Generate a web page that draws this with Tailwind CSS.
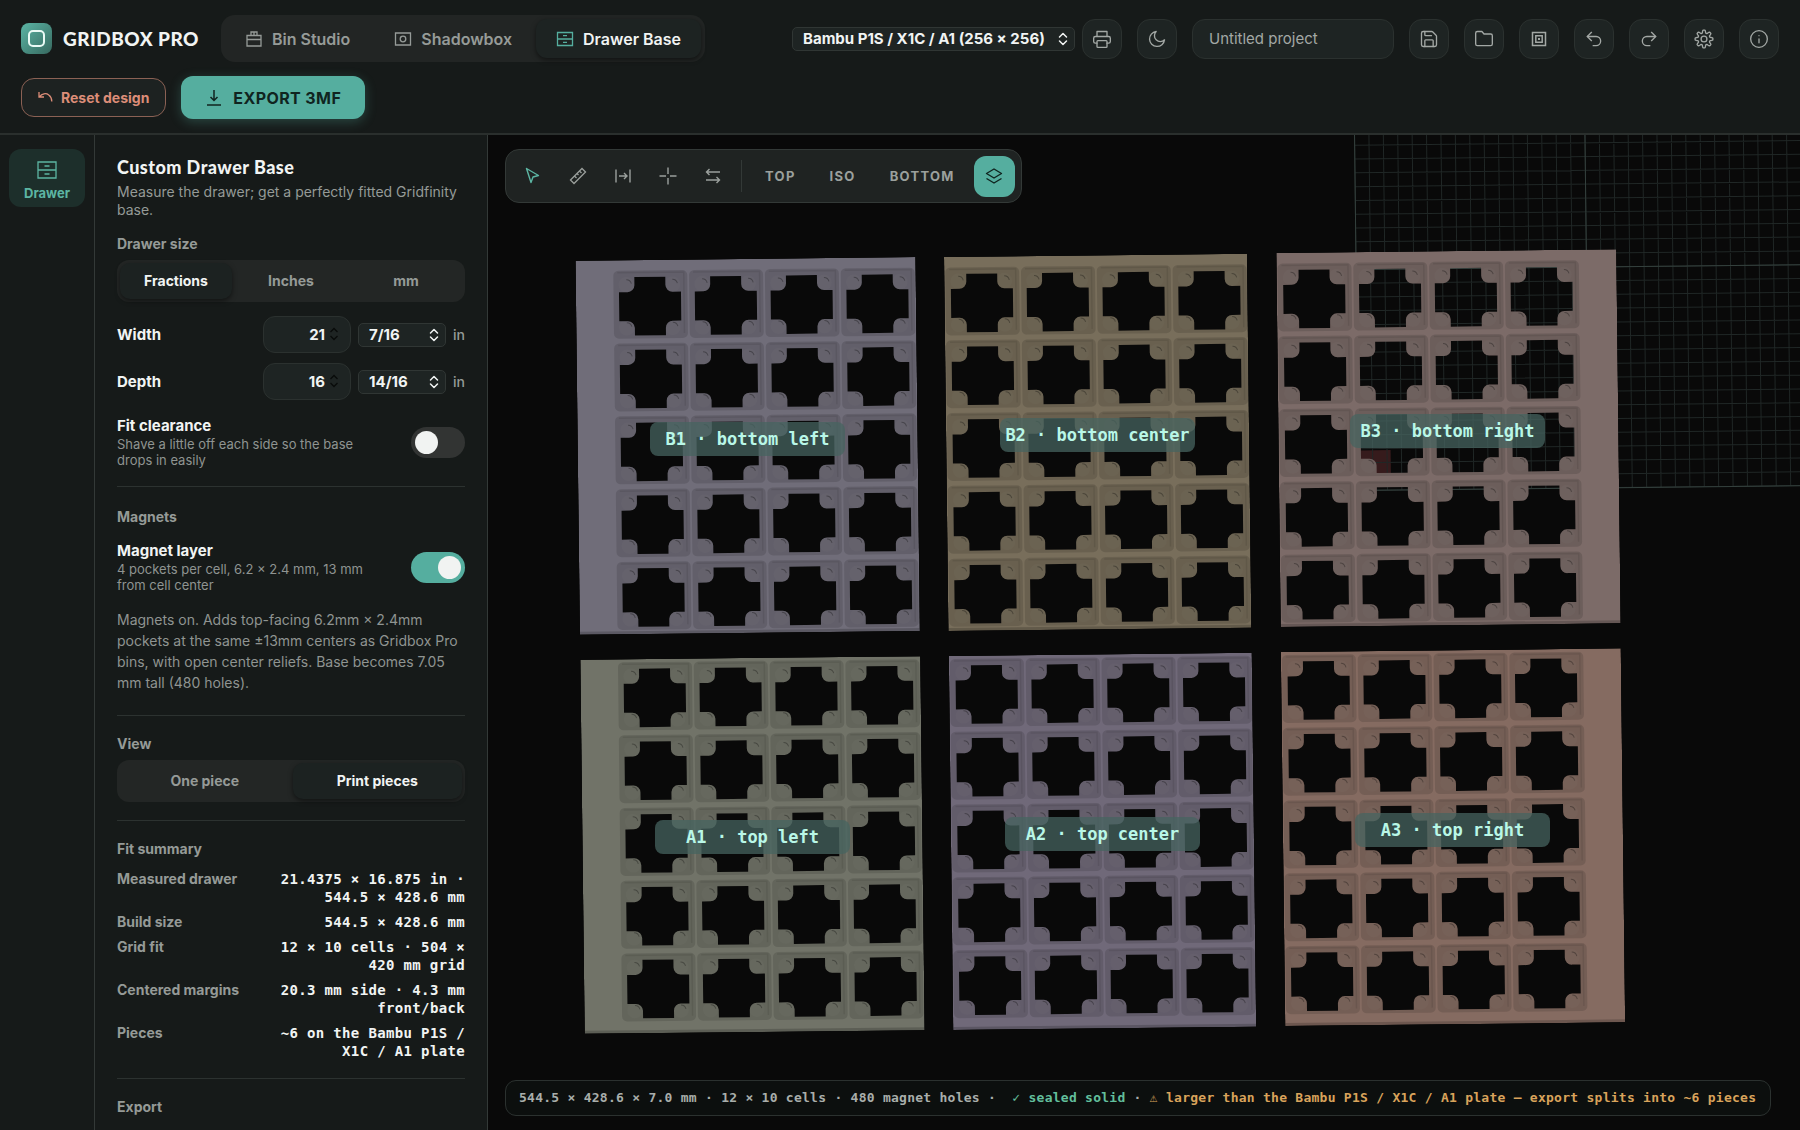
<!DOCTYPE html>
<html lang="en">
<head>
  <meta charset="UTF-8" />
  <meta name="viewport" content="width=device-width, initial-scale=1" />
  <title>Gridbox Pro</title>
  <script src="https://cdn.jsdelivr.net/npm/@tailwindcss/browser@4"></script>
</head>
<body class="h-screen flex flex-col overflow-hidden bg-[#161a19] text-[#f1f4f3] font-['Inter',sans-serif] text-sm">

  <header class="border-b-2 border-[#2a2f2d] px-[21px] pt-[15px] pb-[14px] flex flex-col gap-[14px]">
    <div class="flex items-center">
      <div class="flex items-center gap-[11px]">
        <svg class="size-[31px]" viewBox="0 0 31 31" fill="none">
          <defs><linearGradient id="logo" x1="0" y1="0" x2="1" y2="1"><stop stop-color="#5bb5a5" /><stop offset="1" stop-color="#37695f" /></linearGradient></defs>
          <rect width="31" height="31" rx="8" fill="url(#logo)" />
          <rect x="8" y="8" width="15" height="15" rx="4" stroke="#eafaf5" stroke-width="2" />
        </svg>
        <span class="font-['Lato',sans-serif] font-black text-[19px] tracking-wide whitespace-nowrap">GRIDBOX PRO</span>
      </div>

      <nav class="ml-[22px] h-[47px] p-1 flex gap-1 rounded-[14px] bg-[#222524] text-base font-semibold text-[#969b98] whitespace-nowrap">
        <button class="px-5 flex items-center gap-[9px] rounded-[11px]">
          <svg class="size-[18px]" viewBox="0 0 18 18" fill="none" stroke="currentColor" stroke-width="1.3"><path d="M2 5.500h14v10.500H2zM2 9.500h14M6 5.500V2h6v3.500M9 2v3.500" /></svg>
          Bin Studio
        </button>
        <button class="px-5 flex items-center gap-[9px] rounded-[11px]">
          <svg class="size-[18px]" viewBox="0 0 18 18" fill="none" stroke="currentColor" stroke-width="1.3"><path d="M1.500 3h15v12h-15z" /><circle cx="9" cy="9" r="2.800" /></svg>
          Shadowbox
        </button>
        <button class="px-5 flex items-center gap-[9px] rounded-[11px] bg-[#1d2322] text-[#f1f4f3] shadow-[0_2px_5px_rgba(0,0,0,0.5)]">
          <svg class="size-[18px] text-[#55ae9f]" viewBox="0 0 18 18" fill="none" stroke="currentColor" stroke-width="1.3"><path d="M1.500 2.500h15v13h-15zM1.500 9h15M7 5.700h4M7 12.300h4" /></svg>
          Drawer Base
        </button>
      </nav>

      <div class="ml-auto flex items-center gap-[15px] text-[#a3a8a5]">
        <div class="flex items-center gap-[7px]">
          <div class="relative">
            <select aria-label="Printer" class="block appearance-none w-[283px] h-6 pl-[10px] pr-6 rounded-[5px] border border-[#303634] bg-[#1e2423] text-[#f1f4f3] text-[15px] leading-5 font-bold">
              <option>Bambu P1S / X1C / A1 (256 × 256)</option>
            </select>
            <svg class="absolute right-[7px] top-[5px] w-[10px] h-[14px] text-[#f1f4f3] pointer-events-none" viewBox="0 0 10 14" fill="none" stroke="currentColor" stroke-width="1.500" stroke-linecap="round" stroke-linejoin="round"><path d="M1.500 5 5 1.500 8.500 5M1.500 9 5 12.500 8.500 9" /></svg>
          </div>
          <button aria-label="Print" class="size-10 grid place-items-center rounded-[13px] border border-[#2b312f] bg-[#1e2423]">
            <svg class="size-5" viewBox="0 0 24 24" fill="none" stroke="currentColor" stroke-width="1.600" stroke-linecap="round" stroke-linejoin="round"><path d="M6 9V3h12v6M6 17H4a2 2 0 0 1-2-2v-4a2 2 0 0 1 2-2h16a2 2 0 0 1 2 2v4a2 2 0 0 1-2 2h-2" /><rect x="6" y="14" width="12" height="8" rx="1" /></svg>
          </button>
        </div>
        <button aria-label="Dark mode" class="size-10 grid place-items-center rounded-[13px] border border-[#2b312f] bg-[#1e2423]">
          <svg class="size-5" viewBox="0 0 24 24" fill="none" stroke="currentColor" stroke-width="1.600" stroke-linecap="round" stroke-linejoin="round"><path d="M21 13A9 9 0 1 1 11 3a7 7 0 0 0 10 10z" /></svg>
        </button>
        <input type="text" aria-label="Project name" placeholder="Untitled project" class="w-[202px] h-10 px-4 rounded-[13px] border border-[#2b312f] bg-[#1e2423] text-[15px] placeholder:text-[#a3a8a5]" />
        <button aria-label="Save" class="size-10 grid place-items-center rounded-[13px] border border-[#2b312f] bg-[#1e2423]">
          <svg class="size-5" viewBox="0 0 24 24" fill="none" stroke="currentColor" stroke-width="1.600" stroke-linecap="round" stroke-linejoin="round"><path d="M15.200 3a2 2 0 0 1 1.400.6l3.800 3.800a2 2 0 0 1 .6 1.400V19a2 2 0 0 1-2 2H5a2 2 0 0 1-2-2V5a2 2 0 0 1 2-2z" /><path d="M17 21v-7a1 1 0 0 0-1-1H8a1 1 0 0 0-1 1v7M7 3v4a1 1 0 0 0 1 1h7" /></svg>
        </button>
        <button aria-label="Open" class="size-10 grid place-items-center rounded-[13px] border border-[#2b312f] bg-[#1e2423]">
          <svg class="size-5" viewBox="0 0 24 24" fill="none" stroke="currentColor" stroke-width="1.600" stroke-linecap="round" stroke-linejoin="round"><path d="M20 20a2 2 0 0 0 2-2V8a2 2 0 0 0-2-2h-8l-2.500-3H4a2 2 0 0 0-2 2v13a2 2 0 0 0 2 2z" /></svg>
        </button>
        <button aria-label="Library" class="size-10 grid place-items-center rounded-[13px] border border-[#2b312f] bg-[#1e2423]">
          <svg class="size-5" viewBox="0 0 20 20" fill="none" stroke="currentColor" stroke-width="1.500"><path d="M3.500 3.500h13v13h-13zM6.800 6.800h6.400v6.400H6.800z" /><path d="M9 9h2v2H9z" fill="currentColor" stroke="none" /></svg>
        </button>
        <button aria-label="Undo" class="size-10 grid place-items-center rounded-[13px] border border-[#2b312f] bg-[#1e2423]">
          <svg class="size-5" viewBox="0 0 24 24" fill="none" stroke="currentColor" stroke-width="1.600" stroke-linecap="round" stroke-linejoin="round"><path d="M9 14 4 9l5-5" /><path d="M4 9h10.500a5.500 5.500 0 0 1 0 11H11" /></svg>
        </button>
        <button aria-label="Redo" class="size-10 grid place-items-center rounded-[13px] border border-[#2b312f] bg-[#1e2423]">
          <svg class="size-5" viewBox="0 0 24 24" fill="none" stroke="currentColor" stroke-width="1.600" stroke-linecap="round" stroke-linejoin="round"><path d="m15 14 5-5-5-5" /><path d="M20 9H9.500a5.500 5.500 0 0 0 0 11H13" /></svg>
        </button>
        <button aria-label="Settings" class="size-10 grid place-items-center rounded-[13px] border border-[#2b312f] bg-[#1e2423]">
          <svg id="gear" class="size-5" viewBox="0 0 24 24" fill="none" stroke="currentColor" stroke-width="1.600" stroke-linejoin="round"><circle cx="12" cy="12" r="3.500" /></svg>
        </button>
        <button aria-label="About" class="size-10 grid place-items-center rounded-[13px] border border-[#2b312f] bg-[#1e2423]">
          <svg class="size-5" viewBox="0 0 24 24" fill="none" stroke="currentColor" stroke-width="1.600" stroke-linecap="round"><circle cx="12" cy="12" r="10" /><path d="M12 16.500V12M12 8v.01" /></svg>
        </button>
      </div>
    </div>

    <div class="flex items-center gap-[15px]">
      <button class="h-[39px] px-4 flex items-center gap-2 rounded-[13px] border border-[#8b6154] bg-[#1d2221] text-[#dc8d78] font-bold">
        <svg class="size-[15px]" viewBox="0 0 15 15" fill="none" stroke="currentColor" stroke-width="1.300"><path d="M1 2v5h5M1.300 6.800C4 3.500 8 2.800 10.800 5c2 1.500 3 4 3 6.500" /></svg>
        Reset design
      </button>
      <button class="h-[43px] px-6 flex items-center gap-[10px] rounded-xl bg-[#55ae9f] text-[#10241f] text-base font-bold tracking-wide shadow-[0_3px_12px_rgba(85,174,159,0.3)]">
        <svg class="size-[18px]" viewBox="0 0 18 18" fill="none" stroke="currentColor" stroke-width="1.500"><path d="M9 1v10M5.500 8 9 11.500 12.500 8M2 16h14" /></svg>
        EXPORT 3MF
      </button>
    </div>
  </header>

  <div class="flex-1 min-h-0 flex">
    <aside class="w-[95px] shrink-0 border-r border-[#333937] px-[9px] pt-[14px]">
      <button class="w-full h-[58px] pt-1 flex flex-col items-center justify-center gap-[3px] rounded-xl bg-[#1d2f2b] text-[#5cb5a3] text-[13px] leading-[18px] font-bold">
        <svg class="size-[22px]" viewBox="0 0 22 22" fill="none" stroke="currentColor" stroke-width="1.300"><path d="M2 3h18v16H2zM2 11h18M8.500 7h5M8.500 15h5" /></svg>
        Drawer
      </button>
    </aside>

    <section class="w-[393px] shrink-0 border-r border-[#333937] px-[22px] pt-5 overflow-y-auto [scrollbar-width:none]">
      <h1 class="font-['Lato',sans-serif] font-black text-lg leading-6 tracking-wide">Custom Drawer Base</h1>
      <p class="mt-1 leading-[18px] text-[#959a97]">Measure the drawer; get a perfectly fitted Gridfinity base.</p>

      <h2 class="mt-[15px] leading-5 font-bold text-[#959a97]">Drawer size</h2>
      <div class="mt-[6px] h-[42px] p-[3px] grid grid-cols-3 gap-[3px] rounded-xl bg-[#232625] font-bold text-[#959a97]">
        <button class="rounded-[10px] bg-[#1c2221] text-[#f1f4f3] shadow-[0_2px_5px_rgba(0,0,0,0.5)]">Fractions</button>
        <button class="rounded-[10px]">Inches</button>
        <button class="rounded-[10px]">mm</button>
      </div>

      <div id="dimensions" class="mt-[14px] flex flex-col gap-[10px]"></div>

      <div class="mt-4 flex items-center justify-between">
        <label for="clearance" class="w-[260px]">
          <span class="block text-[15px] leading-5 font-bold">Fit clearance</span>
          <span class="block text-[13px] leading-4 text-[#8f9491]">Shave a little off each side so the base drops in easily</span>
        </label>
        <input id="clearance" type="checkbox" role="switch" class="appearance-none w-[54px] h-[31px] p-1 rounded-full bg-[#323433] checked:bg-[#55ae9f] before:block before:size-[23px] before:rounded-full before:bg-[#f1f3f2] checked:before:ml-[23px]" />
      </div>

      <h2 class="mt-[18px] border-t border-[#2c3230] pt-5 leading-5 font-bold text-[#959a97]">Magnets</h2>
      <div class="mt-[14px] flex items-center justify-between">
        <label for="magnets" class="w-[260px]">
          <span class="block text-[15px] leading-5 font-bold">Magnet layer</span>
          <span class="block text-[13px] leading-4 text-[#8f9491]">4 pockets per cell, 6.2 × 2.4 mm, 13 mm from cell center</span>
        </label>
        <input id="magnets" type="checkbox" role="switch" checked class="appearance-none w-[54px] h-[31px] p-1 rounded-full bg-[#323433] checked:bg-[#55ae9f] before:block before:size-[23px] before:rounded-full before:bg-[#f1f3f2] checked:before:ml-[23px]" />
      </div>
      <p class="mt-4 leading-[21px] text-[#8f9491]">Magnets on. Adds top-facing 6.2mm × 2.4mm pockets at the same ±13mm centers as Gridbox Pro bins, with open center reliefs. Base becomes 7.05 mm tall (480 holes).</p>

      <h2 class="mt-[22px] border-t border-[#2c3230] pt-[18px] leading-5 font-bold text-[#959a97]">View</h2>
      <div class="mt-[6px] h-[42px] p-[3px] grid grid-cols-2 gap-[3px] rounded-xl bg-[#232625] font-bold text-[#959a97]">
        <button class="rounded-[10px]">One piece</button>
        <button class="rounded-[10px] bg-[#1c2221] text-[#f1f4f3] shadow-[0_2px_5px_rgba(0,0,0,0.5)]">Print pieces</button>
      </div>

      <h2 class="mt-[18px] border-t border-[#2c3230] pt-[18px] leading-5 font-bold text-[#959a97]">Fit summary</h2>
      <dl id="summary" class="mt-[11px] flex flex-col gap-[7px] leading-[18px]"></dl>

      <h2 class="mt-[18px] border-t border-[#2c3230] pt-[18px] leading-5 font-bold text-[#959a97]">Export</h2>
    </section>

    <main class="relative flex-1 min-w-0 bg-[#090909]">
      <svg id="scene" class="block w-full h-full" viewBox="488 135 1312 995" preserveAspectRatio="xMidYMid slice"></svg>

      <div class="absolute left-[17px] top-[14px] h-[54px] p-[6px] flex items-center gap-1 rounded-[14px] border border-[#333937] bg-[#1f2322] text-[#9ba09d]">
        <button aria-label="Select" class="size-[41px] grid place-items-center text-[#5cb5a3]">
          <svg class="size-[18px]" viewBox="0 0 18 18" fill="none" stroke="currentColor" stroke-width="1.400" stroke-linejoin="round"><path d="m2.500 1.500 12 7-5.500 1.500L7 15.500z" /></svg>
        </button>
        <button aria-label="Measure" class="size-[41px] grid place-items-center">
          <svg class="size-[18px]" viewBox="0 0 18 18" fill="none" stroke="currentColor" stroke-width="1.300"><path d="m1.500 13 11.500-11.500L16.500 5 5 16.500zM5.500 9l2 2M8 6.500l1.500 1.500M10.500 4l2 2" /></svg>
        </button>
        <button aria-label="Spacing" class="size-[41px] grid place-items-center">
          <svg class="size-[18px]" viewBox="0 0 18 18" fill="none" stroke="currentColor" stroke-width="1.400"><path d="M2 2.500v13M16 2.500v13M5 9h8M10 6l3 3-3 3" /></svg>
        </button>
        <button aria-label="Center" class="size-[41px] grid place-items-center">
          <svg class="size-[18px]" viewBox="0 0 18 18" fill="none" stroke="currentColor" stroke-width="1.400"><path d="M9 .5v6.500M9 11v6.500M.5 9H7M11 9h6.500" /></svg>
        </button>
        <button aria-label="Swap" class="size-[41px] grid place-items-center">
          <svg class="size-[18px]" viewBox="0 0 18 18" fill="none" stroke="currentColor" stroke-width="1.400"><path d="M16 5H2.500M5.500 2l-3 3 3 3M2 13h13.500M12.500 10l3 3-3 3" /></svg>
        </button>
        <div class="mx-1 w-px h-8 bg-[#333937]"></div>
        <button class="px-[15px] h-[41px] text-[13px] font-bold tracking-widest">TOP</button>
        <button class="px-[15px] h-[41px] text-[13px] font-bold tracking-widest">ISO</button>
        <button class="px-[15px] h-[41px] text-[13px] font-bold tracking-widest">BOTTOM</button>
        <button aria-label="Layers" class="size-[41px] grid place-items-center rounded-[12px] bg-[#55ae9f] text-[#10241f]">
          <svg class="size-[18px]" viewBox="0 0 18 18" fill="none" stroke="currentColor" stroke-width="1.400" stroke-linejoin="round"><path d="m9 2 7.500 4.500L9 11 1.500 6.500zM1.500 11.500 9 16l7.500-4.500" /></svg>
        </button>
      </div>

      <div class="absolute left-[17px] right-[29px] bottom-[14px] h-[36px] px-[13px] flex items-center rounded-[11px] border border-[#2b312f] bg-[#0c0f0e] font-['DejaVu_Sans_Mono',monospace] text-[13px] font-bold tracking-[0.02em] text-[#a9aeab] whitespace-pre overflow-hidden">544.5 × 428.6 × 7.0 mm · 12 × 10 cells · 480 magnet holes ·  <span class="text-[#62bf9c]">✓ sealed solid</span> · <span class="text-[#d9a35b]">⚠ larger than the Bambu P1S / X1C / A1 plate — export splits into ~6 pieces</span></div>
    </main>
  </div>

  <script>
    const dimensions = [
      { id: 'width', name: 'Width', whole: 21, fraction: '7/16' },
      { id: 'depth', name: 'Depth', whole: 16, fraction: '14/16' },
    ];

    const chevrons = '<path d="M1.500 5 5 1.500 8.500 5M1.500 9 5 12.500 8.500 9" />';

    document.getElementById('dimensions').innerHTML = dimensions.map(d => `
      <div class="flex items-center gap-[7px]">
        <label for="${d.id}" class="mr-auto text-[15px] font-bold">${d.name}</label>
        <div class="relative">
          <input id="${d.id}" type="number" value="${d.whole}" class="block w-[88px] h-[37px] pr-[25px] rounded-xl border border-[#2b312f] bg-[#1e2423] text-right text-[15px] font-bold [&::-webkit-inner-spin-button]:appearance-none" />
          <svg class="absolute right-[12px] top-[11px] w-[10px] h-[14px] text-[#090b0a] pointer-events-none" viewBox="0 0 10 14" fill="none" stroke="currentColor" stroke-width="1.300">${chevrons}</svg>
        </div>
        <div class="relative">
          <select aria-label="${d.name} fraction" class="block appearance-none w-[88px] h-6 pl-[10px] rounded-[5px] border border-[#303634] bg-[#1e2423] text-[15px] leading-5 font-bold"><option>${d.fraction}</option></select>
          <svg class="absolute right-[7px] top-[5px] w-[10px] h-[14px] pointer-events-none" viewBox="0 0 10 14" fill="none" stroke="currentColor" stroke-width="1.500" stroke-linecap="round" stroke-linejoin="round">${chevrons}</svg>
        </div>
        <span class="text-[#959a97] font-medium">in</span>
      </div>
    `).join('');

    const summary = [
      ['Measured drawer', '21.4375 × 16.875 in · 544.5 × 428.6 mm'],
      ['Build size', '544.5 × 428.6 mm'],
      ['Grid fit', '12 × 10 cells · 504 × 420 mm grid'],
      ['Centered margins', '20.3 mm side · 4.3 mm front/back'],
      ['Pieces', '~6 on the Bambu P1S / X1C / A1 plate'],
    ];

    document.getElementById('summary').innerHTML = summary.map(([name, value]) => `
      <div class="flex justify-between">
        <dt class="font-bold text-[#959a97] whitespace-nowrap">${name}</dt>
        <dd class="w-[195px] text-right font-['DejaVu_Sans_Mono',monospace] font-bold tracking-wide">${value}</dd>
      </div>
    `).join('');

    // settings icon: eight rounded teeth around the hub
    const teeth = [];
    for (let i = 0; i <= 96; i++) {
      const a = i / 96 * Math.PI * 2;
      const r = 9 + 1.7 * Math.tanh(2.5 * Math.cos(a * 8));
      teeth.push(`${(12 + r * Math.sin(a)).toFixed(2)} ${(12 - r * Math.cos(a)).toFixed(2)}`);
    }
    document.getElementById('gear').insertAdjacentHTML('beforeend', `<path d="M${teeth.join('L')}Z" />`);

    // the camera is tipped slightly, so everything on the plate shares one skew
    const place = (x, y) => `matrix(1 -0.0107 0.0117 1 ${x} ${y})`;
    const cellW = 75.8, cellH = 72.8;

    const pieces = [
      { x: 575.5, y: 260.7, w: 340, gx: 36.6, gy: 7.5, color: '#706d79', label: 'B1 · bottom left', lx: 650, ly: 422 },
      { x: 944, y: 257, w: 303, gx: 0, gy: 7.5, color: '#786e5b', label: 'B2 · bottom center', lx: 1000, ly: 418 },
      { x: 1276.3, y: 253, w: 340, gx: 0, gy: 7.5, color: '#7c6b68', label: 'B3 · bottom right', lx: 1350, ly: 414 },
      { x: 580.3, y: 659.8, w: 340, gx: 36.6, gy: 0, color: '#717368', label: 'A1 · top left', lx: 655, ly: 820 },
      { x: 948.8, y: 656, w: 303, gx: 0, gy: 0, color: '#706979', label: 'A2 · top center', lx: 1005, ly: 817 },
      { x: 1280.8, y: 652, w: 340, gx: 0, gy: 0, color: '#856b61', label: 'A3 · top right', lx: 1355, ly: 813 },
    ];

    const opening = (x, y) => `M${x + 22} ${y + 9.5}h31v8a7 7 0 0 0 7 7h8.500v29h-8.500a7 7 0 0 0-7 7v7.500h-31v-7.500a7 7 0 0 0-7-7h-8.500v-29h8.500a7 7 0 0 0 7-7z`;
    const pocket = (x, y) => `M${x + 5} ${y + 3}h64a5 5 0 0 1 5 5v58a5 5 0 0 1-5 5h-64a5 5 0 0 1-5-5v-58a5 5 0 0 1 5-5z`;

    function drawPiece(p) {
      let openings = '', pockets = '', ledges = '', pads = '', arcs = '';
      for (let row = 0; row < 5; row++) {
        for (let col = 0; col < 4; col++) {
          const x = p.gx + col * cellW, y = p.gy + row * cellH;
          openings += opening(x, y);
          pockets += pocket(x + 1, y);
          ledges += `M${x + 5} ${y + 5}H${x + 71.5}V${y + 66}`;
          for (const [cx, cy] of [[14, 17], [60, 17], [14, 60], [60, 60]]) {
            pads += `<circle cx="${x + cx}" cy="${y + cy}" r="8" />`;
            arcs += `M${x + cx} ${y + cy - 5}q4 0 5 4`;
          }
        }
      }
      const id = p.label.slice(0, 2);
      return `
        <g transform="${place(p.x, p.y)}">
          <clipPath id="clip${id}"><path clip-rule="evenodd" d="M0 0H${p.w}V374H0Z${openings}" /></clipPath>
          <g clip-path="url(#clip${id})">
            <rect width="${p.w}" height="374" fill="${p.color}" />
            <path d="${pockets}" fill="#000" fill-opacity="0.12" />
            <path d="${ledges}" fill="none" stroke="#000" stroke-opacity="0.08" stroke-width="1.500" />
            <g fill="#fff" fill-opacity="0.02">${pads}</g>
            <path d="${arcs}" fill="none" stroke="#000" stroke-opacity="0.3" />
            <rect y="371" width="${p.w}" height="3" fill="#000" fill-opacity="0.18" />
          </g>
        </g>`;
    }

    function drawPlate() {
      let minor = '';
      for (let i = -16; i <= 16; i++) {
        minor += `M${i * 14.4} -221V221M-230.4 ${i * 13.8}H230.4`;
      }
      return `
        <g transform="${place(1586.5, 267)}" fill="none">
          <rect x="-228" y="181" width="30" height="24" fill="#361b1c" />
          <path d="${minor}" stroke="#202726" />
          <path d="M0 -221V221M-230.4 0H230.4M-230.4 -221H230.4V221H-230.4Z" stroke="#34403d" />
        </g>`;
    }

    function drawLabel(p) {
      return `
        <rect x="${p.lx}" y="${p.ly}" width="195" height="34" rx="8" fill="#466460" fill-opacity="0.74" />
        <text x="${p.lx + 97.5}" y="${p.ly + 23}" text-anchor="middle" fill="#b9f7e7" class="font-['DejaVu_Sans_Mono',monospace] font-bold text-[17px]">${p.label}</text>`;
    }

    document.getElementById('scene').innerHTML =
      drawPlate() + pieces.map(drawPiece).join('') + pieces.map(drawLabel).join('');
  </script>

</body>
</html>
